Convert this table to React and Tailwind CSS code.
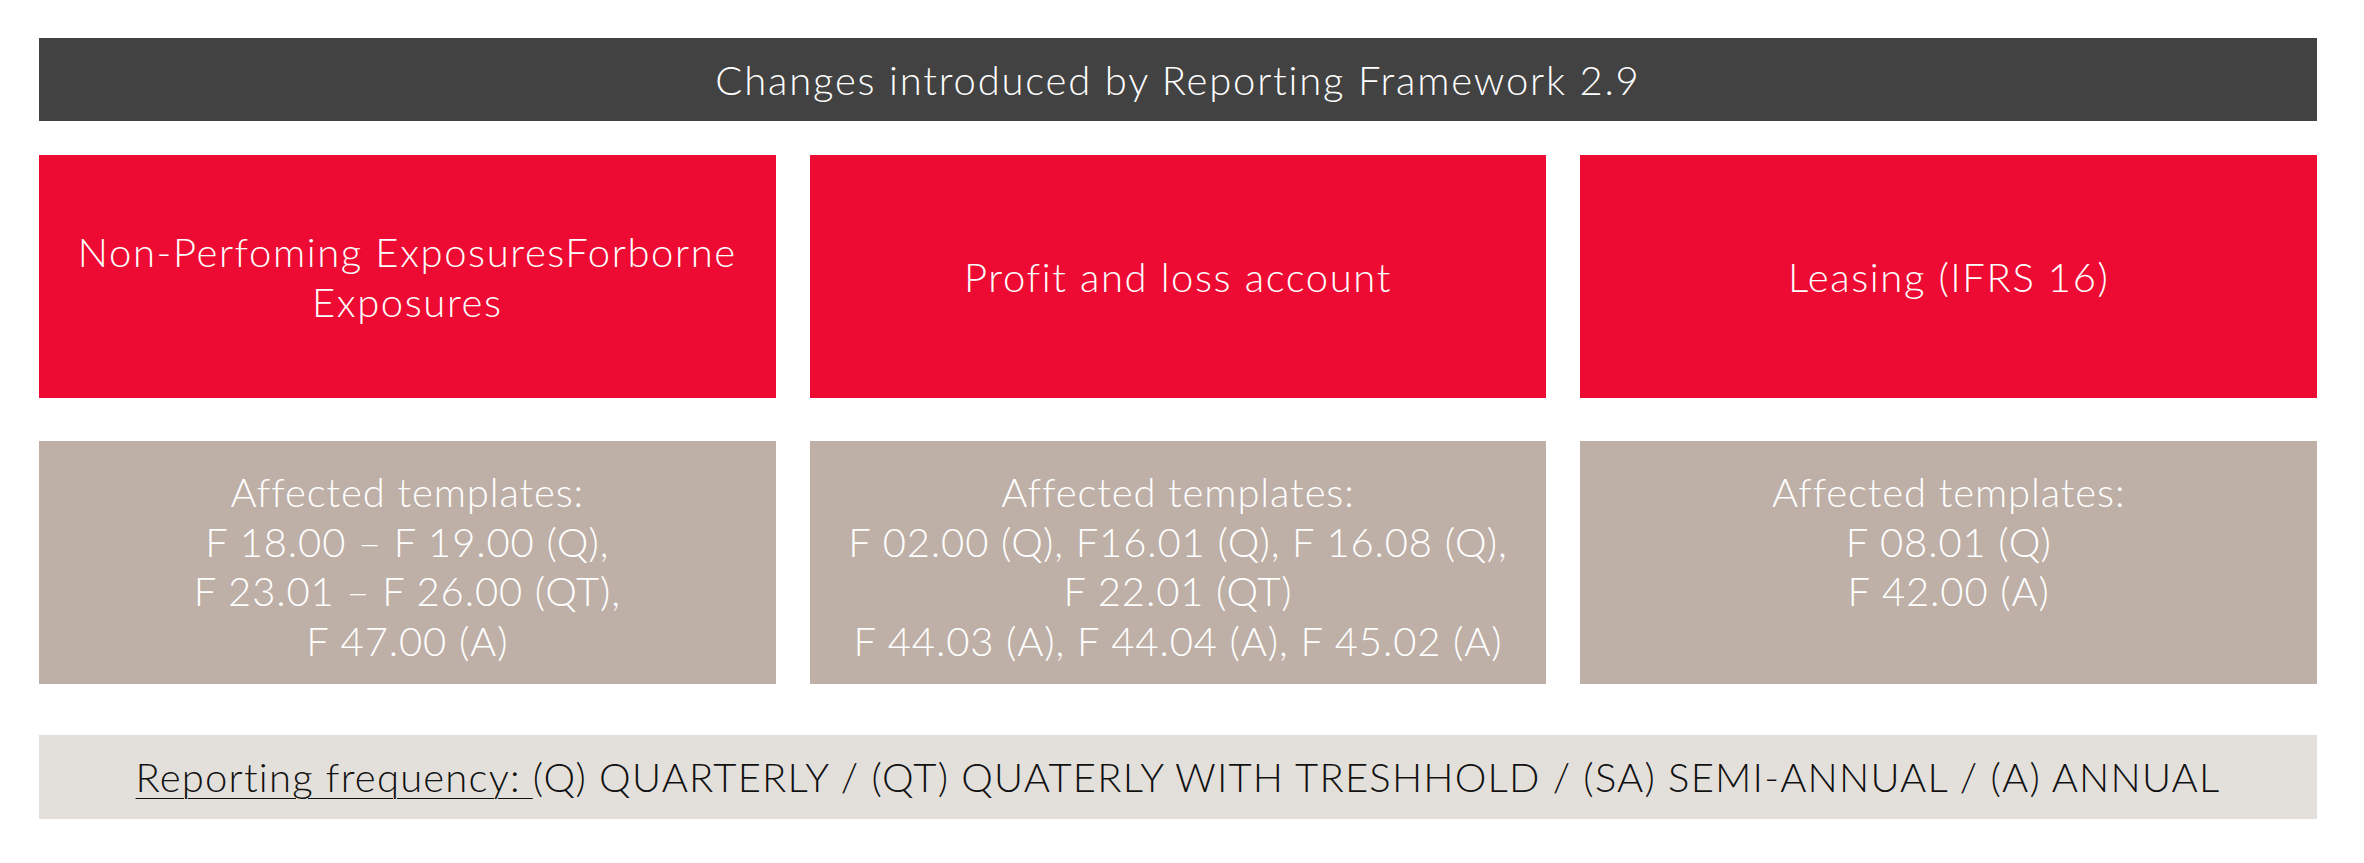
import React from 'react'

const changes = [
  { title: ['Non-Perfoming ExposuresForborne', 'Exposures'], templates: ['F 18.00 – F 19.00 (Q),', 'F 23.01 – F 26.00 (QT),', 'F 47.00 (A)'] },
  { title: ['Profit and loss account'], templates: ['F 02.00 (Q), F16.01 (Q), F 16.08 (Q),', 'F 22.01 (QT)', 'F 44.03 (A), F 44.04 (A), F 45.02 (A)'] },
  { title: ['Leasing (IFRS 16)'], templates: ['F 08.01 (Q)', 'F 42.00 (A)'] },
]

export default function App()
{
  return (
    <div className="min-h-[863px] w-[2364px] bg-white pt-[38px] font-['Lato','Open_Sans',sans-serif] font-light">
      <div className="ml-[39px] flex w-[2278px] flex-col">
        <div className="flex h-[83px] items-center justify-center bg-[#424242] text-[40px] tracking-[0.045em] text-white">
          Changes introduced by Reporting Framework 2.9
        </div>

        <div className="mt-[34px] grid grid-cols-3 gap-[34px]">
          { changes.map((c, k) =>
            <div key={k} className="flex h-[243px] flex-col items-center justify-center bg-[#ed0b33] text-center text-[40px] leading-[50px] tracking-[0.04em] text-white">
              { c.title.map((t, i) => <span key={i}>{t}</span>) }
            </div>
          ) }
        </div>

        <div className="mt-[43px] grid grid-cols-3 gap-[34px]">
          { changes.map((c, k) =>
            <div key={k} className="flex h-[243px] flex-col items-center bg-[#beb0a7] pt-[27px] text-center text-[40px] leading-[49.5px] tracking-[0.022em] text-white">
              <span>Affected templates:</span>
              { c.templates.map((t, i) => <span key={i}>{t}</span>) }
            </div>
          ) }
        </div>

        <div className="mt-[51px] flex h-[84px] items-center justify-center bg-[#e3e0dc] text-[40px] tracking-[0.03em] text-[#111]">
          <span className="whitespace-pre underline decoration-1 underline-offset-[6px]">Reporting frequency: </span>
          <span>(Q) QUARTERLY / (QT) QUATERLY WITH TRESHHOLD / (SA) SEMI-ANNUAL / (A) ANNUAL</span>
        </div>
      </div>
    </div>
  )
}
